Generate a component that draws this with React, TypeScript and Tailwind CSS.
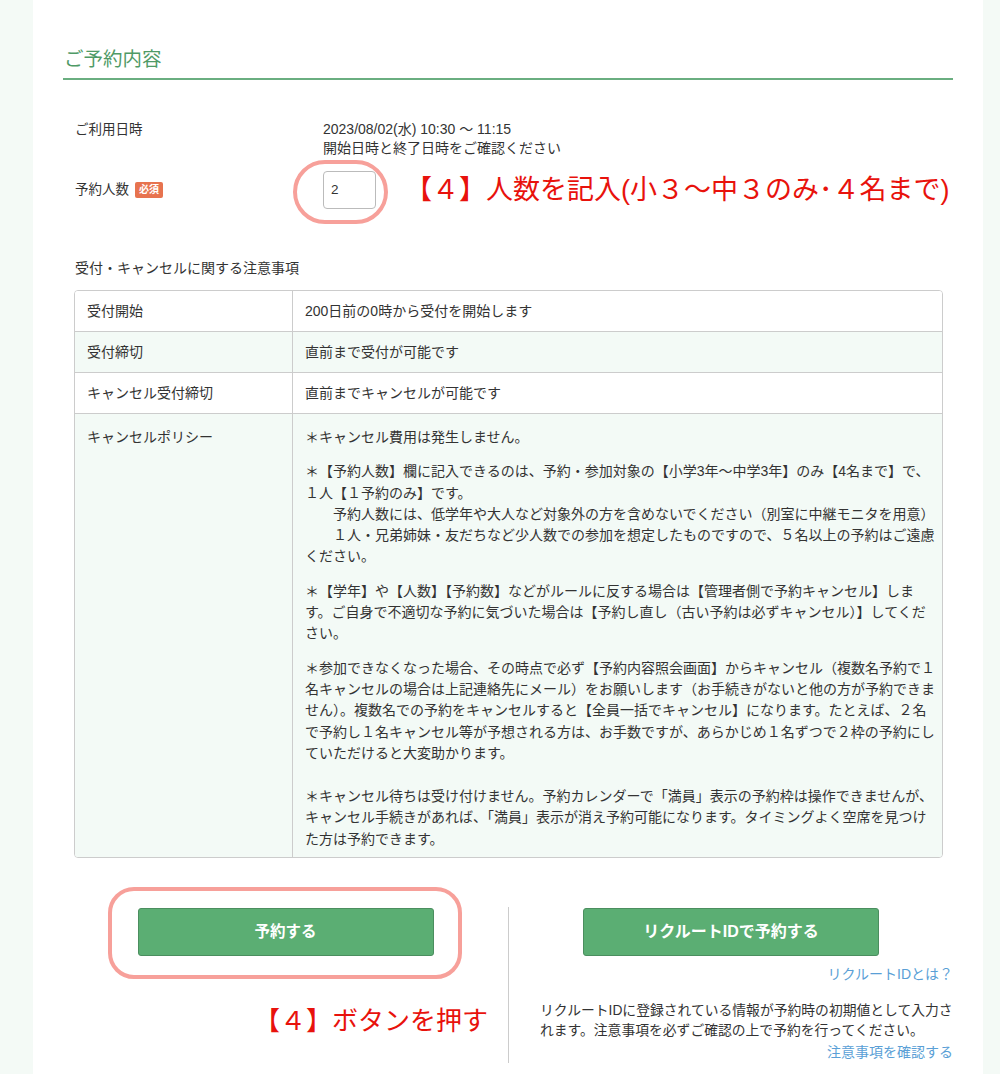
import React from "react";

const font = "font-['Liberation_Sans','Noto_Sans_CJK_JP',sans-serif]";

const policy: string[][] = [
  ["＊キャンセル費用は発生しません。"],
  [
    "＊【予約人数】欄に記入できるのは、予約・参加対象の【小学3年〜中学3年】のみ【4名まで】で、",
    "１人【１予約のみ】です。",
    "　　予約人数には、低学年や大人など対象外の方を含めないでください（別室に中継モニタを用意）",
    "　　１人・兄弟姉妹・友だちなど少人数での参加を想定したものですので、５名以上の予約はご遠慮",
    "ください。",
  ],
  [
    "＊【学年】や【人数】【予約数】などがルールに反する場合は【管理者側で予約キャンセル】しま",
    "す。ご自身で不適切な予約に気づいた場合は【予約し直し（古い予約は必ずキャンセル）】してくだ",
    "さい。",
  ],
  [
    "＊参加できなくなった場合、その時点で必ず【予約内容照会画面】からキャンセル（複数名予約で１",
    "名キャンセルの場合は上記連絡先にメール）をお願いします（お手続きがないと他の方が予約できま",
    "せん）。複数名での予約をキャンセルすると【全員一括でキャンセル】になります。たとえば、２名",
    "で予約し１名キャンセル等が予想される方は、お手数ですが、あらかじめ１名ずつで２枠の予約にし",
    "ていただけると大変助かります。",
  ],
  [
    "＊キャンセル待ちは受け付けません。予約カレンダーで「満員」表示の予約枠は操作できませんが、",
    "キャンセル手続きがあれば、「満員」表示が消え予約可能になります。タイミングよく空席を見つけ",
    "た方は予約できます。",
  ],
];

const rows = [
  { label: "受付開始", value: "200日前の0時から受付を開始します", green: false },
  { label: "受付締切", value: "直前まで受付が可能です", green: true },
  { label: "キャンセル受付締切", value: "直前までキャンセルが可能です", green: false },
];

export default function App() {
  return (
    <div className={`${font} h-[1074px] overflow-hidden bg-[#f4faf6] text-[#333]`}>
      <div className="ml-[33px] w-[950px] h-full bg-white px-[30px] pt-[46px]">
        <h2 className="border-b-2 border-[#6aae80] pb-[5px] pl-[1px] text-[19.5px] leading-[27px] text-[#4f9a66]">
          ご予約内容
        </h2>

        <div className="mt-[40px] flex pl-[12px] text-[14px] leading-[19px]">
          <div className="w-[248px] text-[13.5px]">ご利用日時</div>
          <div>
            <div>2023/08/02(水) 10:30 〜 11:15</div>
            <div>開始日時と終了日時をご確認ください</div>
          </div>
        </div>

        <div className="mt-[13px] flex items-center pl-[12px] text-[13.5px]">
          <div className="flex w-[248px] items-center">
            <span>予約人数</span>
            <span className="ml-[6px] rounded-[2px] bg-[#e7734f] px-[4px] text-[10px] font-bold leading-[16px] text-white">
              必須
            </span>
          </div>
          <div className="relative">
            <div className="flex h-[38px] w-[53px] items-center rounded-[4px] border border-[#bbb] pl-[7px]">2</div>
            <div className="absolute -left-[30px] -right-[12px] -top-[11px] -bottom-[15px] rounded-[32px] border-4 border-[#f7a09a]" />
          </div>
          <div className="ml-[29px] text-[27px] leading-[30px] text-[#e8120c]">
            【４】人数を記入(小３〜中３のみ･４名まで)
          </div>
        </div>

        <div className="mt-[49px] pl-[12px] text-[14px] leading-[20px]">受付・キャンセルに関する注意事項</div>

        <div className="ml-[11px] mr-[10px] mt-[12px] overflow-hidden rounded-[4px] border border-[#ccc] text-[14px]">
          {rows.map((r) => (
            <div key={r.label} className={`flex h-[41px] border-b border-[#ccc] ${r.green ? "bg-[#f3faf6]" : "bg-white"}`}>
              <div className="flex w-[218px] shrink-0 items-center border-r border-[#ccc] px-[12px]">{r.label}</div>
              <div className="flex items-center px-[12px]">{r.value}</div>
            </div>
          ))}
          <div className="flex bg-[#f3faf6]">
            <div className="w-[218px] shrink-0 border-r border-[#ccc] px-[12px] pt-[13px] leading-[21.3px]">
              キャンセルポリシー
            </div>
            <div className="flex flex-col px-[12px] pb-[7px] pt-[13px] leading-[21.3px]">
              {policy.map((p, i) => (
                <div key={i} className={i === 0 ? "" : i === 4 ? "mt-[22px]" : "mt-[13px]"}>
                  {p.map((line, j) => (
                    <div key={j} className="whitespace-pre">
                      {line}
                    </div>
                  ))}
                </div>
              ))}
            </div>
          </div>
        </div>

        <div className="mt-[49px] grid grid-cols-2">
          <div className="flex flex-col">
            <div className="relative mx-auto mt-[1px]">
              <button className="h-[48px] w-[296px] rounded-[3px] border border-[#4b8e5f] bg-[#5bae73] text-[15.5px] font-bold text-white">
                予約する
              </button>
              <div className="absolute -left-[30px] -right-[28px] -top-[21px] -bottom-[23px] rounded-[26px] border-4 border-[#f7a09a]" />
            </div>
            <div className="mt-[50px] self-end pr-[20px] text-[26px] leading-[30px] text-[#e8120c]">
              【４】ボタンを押す
            </div>
          </div>
          <div className="flex h-[156px] flex-col border-l border-[#ccc] text-[14px]">
            <button className="mx-auto mt-[1px] h-[48px] w-[296px] rounded-[3px] border border-[#4b8e5f] bg-[#5bae73] text-[16px] font-bold text-white">
              リクルートIDで予約する
            </button>
            <div className="mt-[8px] text-right leading-[20px] text-[#5a9fd6]">リクルートIDとは？</div>
            <div className="mt-[17px] pl-[31px] text-[13.8px] leading-[20px]">
              <div className="whitespace-nowrap">リクルートIDに登録されている情報が予約時の初期値として入力さ</div>
              <div className="whitespace-nowrap">れます。注意事項を必ずご確認の上で予約を行ってください。</div>
            </div>
            <div className="mt-[1px] text-right leading-[20px] text-[#5a9fd6]">注意事項を確認する</div>
          </div>
        </div>
      </div>
    </div>
  );
}
